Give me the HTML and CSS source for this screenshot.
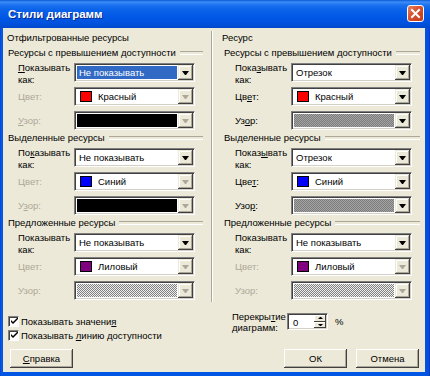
FILE: index.html
```html
<!DOCTYPE html>
<html lang="ru">
<head>
<meta charset="utf-8">
<title>Стили диаграмм</title>
<link rel="stylesheet" href="styles.css">
</head>
<body>
<div class="window">
  <div class="titlebar">
    <span class="title">Стили диаграмм</span>
    <span class="close"><svg width="15" height="15" viewBox="0 0 15 15"><path d="M4 4 L11 11 M11 4 L4 11" stroke="#fff" stroke-width="2" stroke-linecap="square"/></svg></span>
  </div>
  <div class="client">
    <div class="columns">
      <section class="col col-left">
        <div class="heading">Отфильтрованные ресурсы</div>
        <div class="group">
          <div class="ghead"><span>Ресурсы с превышением доступности</span></div>
          <div class="rows">
            <div class="row"><span class="lbl two"><u>П</u>оказывать<br>как:</span><div class="combo"><span class="val sel">Не показывать</span><span class="drop"></span></div></div>
            <div class="row"><span class="lbl dis">Цвет:</span><div class="combo"><span class="val"><i class="sw red"></i><span>Красный</span></span><span class="drop dis"></span></div></div>
            <div class="row"><span class="lbl dis"><u>У</u>зор:</span><div class="combo"><span class="val pat black"></span><span class="drop dis"></span></div></div>
          </div>
        </div>
        <div class="group">
          <div class="ghead"><span>Выделенные ресурсы</span></div>
          <div class="rows">
            <div class="row"><span class="lbl two">По<u>к</u>азывать<br>как:</span><div class="combo"><span class="val">Не показывать</span><span class="drop"></span></div></div>
            <div class="row"><span class="lbl dis">Цвет:</span><div class="combo"><span class="val"><i class="sw blue"></i><span>Синий</span></span><span class="drop dis"></span></div></div>
            <div class="row"><span class="lbl dis">У<u>з</u>ор:</span><div class="combo"><span class="val pat black"></span><span class="drop dis"></span></div></div>
          </div>
        </div>
        <div class="group">
          <div class="ghead"><span>Предложенные ресурсы</span></div>
          <div class="rows">
            <div class="row"><span class="lbl two">Показывать<br>как:</span><div class="combo"><span class="val">Не показывать</span><span class="drop"></span></div></div>
            <div class="row"><span class="lbl dis">Цвет:</span><div class="combo"><span class="val"><i class="sw purple"></i><span>Лиловый</span></span><span class="drop dis"></span></div></div>
            <div class="row"><span class="lbl dis">Узор:</span><div class="combo"><span class="val pat checker"></span><span class="drop dis"></span></div></div>
          </div>
        </div>
      </section>
      <div class="sep"></div>
      <section class="col col-right">
        <div class="heading">Ресурс</div>
        <div class="group">
          <div class="ghead"><span>Ресурсы с превышением доступности</span></div>
          <div class="rows">
            <div class="row"><span class="lbl two">Пока<u>з</u>ывать<br>как:</span><div class="combo"><span class="val">Отрезок</span><span class="drop"></span></div></div>
            <div class="row"><span class="lbl">Цв<u>е</u>т:</span><div class="combo"><span class="val"><i class="sw red"></i><span>Красный</span></span><span class="drop"></span></div></div>
            <div class="row"><span class="lbl">Уз<u>о</u>р:</span><div class="combo"><span class="val pat gray"></span><span class="drop"></span></div></div>
          </div>
        </div>
        <div class="group">
          <div class="ghead"><span>Выделенные ресурсы</span></div>
          <div class="rows">
            <div class="row"><span class="lbl two">Показ<u>ы</u>вать<br>как:</span><div class="combo"><span class="val">Отрезок</span><span class="drop"></span></div></div>
            <div class="row"><span class="lbl">Цве<u>т</u>:</span><div class="combo"><span class="val"><i class="sw blue"></i><span>Синий</span></span><span class="drop"></span></div></div>
            <div class="row"><span class="lbl">Узо<u>р</u>:</span><div class="combo"><span class="val pat gray"></span><span class="drop"></span></div></div>
          </div>
        </div>
        <div class="group">
          <div class="ghead"><span>Предложенные ресурсы</span></div>
          <div class="rows">
            <div class="row"><span class="lbl two">Показывать<br>как:</span><div class="combo"><span class="val">Не показывать</span><span class="drop"></span></div></div>
            <div class="row"><span class="lbl dis">Цвет:</span><div class="combo"><span class="val"><i class="sw purple"></i><span>Лиловый</span></span><span class="drop dis"></span></div></div>
            <div class="row"><span class="lbl dis">Узор:</span><div class="combo"><span class="val pat checker"></span><span class="drop dis"></span></div></div>
          </div>
        </div>
      </section>
    </div>
    <div class="options">
      <div class="checks">
        <div class="check"><span class="box"><svg width="7" height="7" viewBox="0 0 7 7"><path d="M0 2 L0 4 L2 6 L7 1 L7 -1 L2 4 Z" fill="#000"/></svg></span><span>Показывать значени<u>я</u></span></div>
        <div class="check"><span class="box"><svg width="7" height="7" viewBox="0 0 7 7"><path d="M0 2 L0 4 L2 6 L7 1 L7 -1 L2 4 Z" fill="#000"/></svg></span><span>Показывать <u>л</u>инию доступности</span></div>
      </div>
      <div class="overlap">
        <span class="olbl">Перекры<u>т</u>ие<br>диаграмм:</span>
        <div class="spin"><span class="num">0</span><span class="arrows"><span class="up"></span><span class="down"></span></span></div>
        <span class="pct">%</span>
      </div>
    </div>
    <div class="buttons">
      <button class="push"><u>С</u>правка</button>
      <span class="spacer"></span>
      <button class="push">ОК</button>
      <button class="push">Отмена</button>
    </div>
  </div>
</div>
</body>
</html>
```
FILE: styles.css
```css
* { box-sizing: border-box; }
html, body { margin: 0; padding: 0; }
body {
  width: 430px; height: 376px; overflow: hidden;
  font-family: "Liberation Sans", Arial, sans-serif;
  font-size: 9.5px; line-height: 11px; color: #000;
  background: #0A50DC;
}
u { text-decoration: underline; text-underline-offset: 1px; }
.window {
  width: 430px; height: 376px;
  display: flex; flex-direction: column;
  background: linear-gradient(to right, #0838C8 0, #0A5AE8 1px, #0055E3 3px, #0055E3 425px, #0A4BD8 429px, #0632B0 430px);
}
.titlebar {
  height: 28px; flex: none;
  display: flex; align-items: center;
  padding: 0 6px 0 8px;
  background: linear-gradient(to bottom, #0A5BD8 0, #3D8DF5 2px, #1A72F0 5px, #0A62EA 10px, #0058E6 17px, #0052DE 23px, #0048CC 28px);
}
.title {
  flex: 1; color: #fff; font-weight: bold; font-size: 11.5px;
  text-shadow: 1px 1px #0A2A8C;
  margin-top: 1px;
}
.close {
  width: 17px; height: 17px;
  display: flex; align-items: center; justify-content: center;
  border: 1px solid #fff; border-radius: 3px;
  background: linear-gradient(135deg, #E9805E 0, #D6502F 45%, #C13A1A 100%);
  margin-top: -1px;
}
.client {
  flex: 1;
  margin: 0 5px 4px 3px;
  background: #ECE9D8;
  display: flex; flex-direction: column;
}
.columns { display: flex; padding-top: 4px; height: 278px; flex: none; }
.col-left { width: 208px; padding: 0 8px 0 4px; }
.col-right { flex: 1; padding: 0 5px 0 9px; }
.sep {
  width: 2px; height: 271px; margin-top: -1px;
  border-left: 1px solid #ACA899; border-right: 1px solid #fff;
}
.heading { height: 11px; margin-bottom: 4px; }
.group + .group { margin-top: 2px; }
.ghead {
  display: flex; align-items: center;
  height: 11px; margin-bottom: 5px; padding-left: 1px;
  white-space: nowrap;
}
.col-right .ghead { padding-left: 2px; }
.ghead::after {
  content: ""; flex: 1; height: 2px; margin-left: 4px;
  border-top: 1px solid #ACA899; border-bottom: 1px solid #fff;
}
.rows { display: flex; flex-direction: column; gap: 5px; }
.row { display: flex; height: 19px; padding-left: 11px; }
.col-right .row { padding-left: 13px; }
.lbl { width: 56px; flex: none; align-self: center; white-space: nowrap; }
.lbl.two { align-self: flex-start; margin-top: -1px; line-height: 12px; }
.lbl.dis { color: #ACA899; }
.combo {
  width: 121px; height: 19px; flex: none;
  display: flex;
  background: #fff;
  border: 1px solid; border-color: #808080 #fff #fff #808080;
  box-shadow: inset 1px 1px #404040, inset -1px -1px #D4D0C8;
  padding: 1px;
}
.val { flex: 1; display: flex; align-items: center; padding-left: 2px; white-space: nowrap; margin: 1px; }
.val.sel { background: #316AC5; color: #fff; }
.val.pat { padding: 0; }
.val.black { background: #000; }
.val.gray { background: repeating-conic-gradient(#7C7C7C 0 25%, #A4A4A4 0 50%) 0 0 / 2px 2px; }
.val.checker { background: repeating-conic-gradient(#808080 0 25%, #EEEEEE 0 50%) 0 0 / 2px 2px; }
.sw { width: 12px; height: 11px; border: 1px solid #000; margin: 0 6px 0 1px; flex: none; }
.sw.red { background: #FF0000; }
.sw.blue { background: #0000FF; }
.sw.purple { background: #800080; }
.drop {
  width: 15px; height: 15px; flex: none;
  background: #ECE9D8;
  box-shadow: inset -1px -1px #404040, inset 1px 1px #ECE9D8, inset -2px -2px #ACA899, inset 2px 2px #fff;
  display: flex; align-items: center; justify-content: center;
}
.drop::after {
  content: ""; width: 1px; height: 0;
  border-left: 3px solid transparent; border-right: 3px solid transparent;
  border-top: 4px solid #000;
  margin-top: 1px;
}
.drop.dis::after { border-top-color: #ACA899; }
.options { display: flex; height: 31px; margin-top: 4px; flex: none; }
.checks { width: 210px; padding-left: 5px; padding-top: 4px; }
.check { display: flex; align-items: center; height: 14px; white-space: nowrap; }
.box {
  width: 11px; height: 11px; flex: none;
  background: #fff;
  border: 1px solid; border-color: #808080 #fff #fff #808080;
  box-shadow: inset 1px 1px #404040;
  margin-right: 2px;
  display: flex; align-items: center; justify-content: center;
  padding: 1px 0 0 1px;
}
.overlap { display: flex; padding-left: 19px; }
.olbl { width: 55px; flex: none; line-height: 11px; white-space: nowrap; margin-top: 1px; }
.spin {
  width: 41px; height: 17px; margin-top: 3px;
  display: flex;
  background: #fff;
  border: 1px solid; border-color: #808080 #fff #fff #808080;
  box-shadow: inset 1px 1px #404040, inset -1px -1px #D4D0C8;
  padding: 1px;
}
.num { flex: 1; padding-left: 4px; line-height: 13px; margin-top: 1px; }
.arrows { width: 12px; display: flex; flex-direction: column; }
.up, .down {
  flex: 1; background: #ECE9D8;
  box-shadow: inset -1px -1px #404040, inset 1px 1px #fff;
  display: flex; align-items: center; justify-content: center;
}
.up::after, .down::after {
  content: ""; width: 1px; height: 0;
  border-left: 2px solid transparent; border-right: 2px solid transparent;
}
.up::after { border-bottom: 2px solid #000; }
.down::after { border-top: 2px solid #000; }
.pct { margin-left: 7px; margin-top: 6px; }
.buttons { display: flex; margin-top: 8px; padding: 0 6px 0 7px; gap: 9px; }
.spacer { flex: 1; }
.push {
  width: 63px; height: 19px; padding: 0;
  font: inherit; color: #000;
  background: #ECE9D8; border: none;
  box-shadow: inset -1px -1px #404040, inset 1px 1px #fff, inset -2px -2px #ACA899;
}
```
